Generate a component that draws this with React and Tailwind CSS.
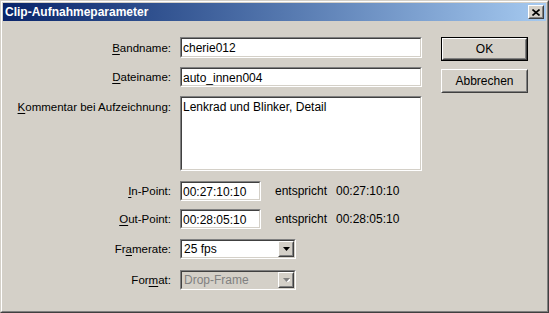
import React from 'react';

const font = { fontFamily: '"Liberation Sans", Arial, sans-serif' };

function Key({ children }) {
  return <span className="underline underline-offset-[2px]">{children}</span>;
}

function Sunken({ className = '', children }) {
  return (
    <div className={`border border-t-[#808080] border-l-[#808080] border-b-white border-r-white ${className}`}>
      <div className="h-full w-full border border-t-[#404040] border-l-[#404040] border-b-[#d4d0c8] border-r-[#d4d0c8] bg-white">
        {children}
      </div>
    </div>
  );
}

function Raised({ className = '', children }) {
  return (
    <div className={`border border-t-white border-l-white border-b-[#404040] border-r-[#404040] ${className}`}>
      <div className="flex h-full w-full items-center justify-center border border-t-[#d4d0c8] border-l-[#d4d0c8] border-b-[#808080] border-r-[#808080] bg-[#d4d0c8]">
        {children}
      </div>
    </div>
  );
}

function TextField({ value, className }) {
  return (
    <Sunken className={className}>
      <div className="px-[1px] pt-[2px] text-[12px] leading-[14px] text-black">{value}</div>
    </Sunken>
  );
}

function Select({ value, disabled }) {
  return (
    <Sunken className="h-[20px] w-[116px]">
      <div className={`flex h-full items-center ${disabled ? 'bg-[#d4d0c8]' : 'bg-white'}`}>
        <div className={`flex-1 pl-[2px] text-[12px] leading-[14px] ${disabled ? 'text-[#808080]' : 'text-black'}`}>{value}</div>
        <Raised className="h-[16px] w-[16px]">
          <svg width="7" height="4" viewBox="0 0 7 4">
            {disabled && <path d="M1 1h7l-3.5 4z" fill="#ffffff" />}
            <path d="M0 0h7l-3.5 4z" fill={disabled ? '#808080' : '#000000'} />
          </svg>
        </Raised>
      </div>
    </Sunken>
  );
}

function Row({ label, top, children, alignTop }) {
  return (
    <div className={`flex ${alignTop ? 'items-start' : 'items-center'}`} style={{ marginTop: top }}>
      <div className={`w-[169px] pr-[1px] text-right text-[11.5px] leading-[14px] text-black ${alignTop ? 'pt-[4px]' : ''}`}>{label}</div>
      <div className="ml-[8px] flex items-center">{children}</div>
    </div>
  );
}

export default function App() {
  return (
    <div className="h-[313px] w-[549px] border border-t-[#d4d0c8] border-l-[#d4d0c8] border-b-[#404040] border-r-[#404040]" style={font}>
      <div className="h-full w-full border border-t-white border-l-white border-b-[#808080] border-r-[#808080] bg-[#d4d0c8] p-[1px]">
        <div className="flex h-[18px] items-center justify-between bg-gradient-to-r from-[#0a246a] to-[#a6caf0] pl-[2px] pr-[2px]">
          <span className="text-[12px] font-bold leading-[14px] text-white">Clip-Aufnahmeparameter</span>
          <Raised className="h-[14px] w-[16px]">
            <svg width="8" height="7" viewBox="0 0 8 7">
              <path d="M0.5 0.5l7 6M7.5 0.5l-7 6" stroke="#000" strokeWidth="1.6" />
            </svg>
          </Raised>
        </div>

        <div className="flex">
          <div className="flex flex-col">
            <Row label={<><Key>B</Key>andname:</>} top={16}>
              <TextField value="cherie012" className="h-[21px] w-[242px]" />
            </Row>
            <Row label={<><Key>D</Key>ateiname:</>} top={9}>
              <TextField value="auto_innen004" className="h-[20px] w-[242px]" />
            </Row>
            <Row label={<><Key>K</Key>ommentar bei Aufzeichnung:</>} top={9} alignTop>
              <TextField value="Lenkrad und Blinker, Detail" className="h-[75px] w-[242px]" />
            </Row>
            <Row label={<><Key>I</Key>n-Point:</>} top={10}>
              <TextField value="00:27:10:10" className="h-[20px] w-[81px]" />
              <span className="ml-[14px] w-[61px] text-[12px] leading-[14px]">entspricht</span>
              <span className="text-[12px] leading-[14px]">00:27:10:10</span>
            </Row>
            <Row label={<><Key>O</Key>ut-Point:</>} top={8}>
              <TextField value="00:28:05:10" className="h-[20px] w-[81px]" />
              <span className="ml-[14px] w-[61px] text-[12px] leading-[14px]">entspricht</span>
              <span className="text-[12px] leading-[14px]">00:28:05:10</span>
            </Row>
            <Row label={<>Fr<Key>a</Key>merate:</>} top={10}>
              <Select value="25 fps" />
            </Row>
            <Row label={<>For<Key>m</Key>at:</>} top={11}>
              <Select value="Drop-Frame" disabled />
            </Row>
          </div>

          <div className="ml-[19px] mt-[16px] flex flex-col">
            <div className="h-[24px] w-[87px] border border-black">
              <Raised className="h-full w-full">
                <span className="text-[12px] leading-[14px]">OK</span>
              </Raised>
            </div>
            <Raised className="mt-[8px] h-[24px] w-[87px]">
              <span className="text-[12px] leading-[14px]">Abbrechen</span>
            </Raised>
          </div>
        </div>
      </div>
    </div>
  );
}
